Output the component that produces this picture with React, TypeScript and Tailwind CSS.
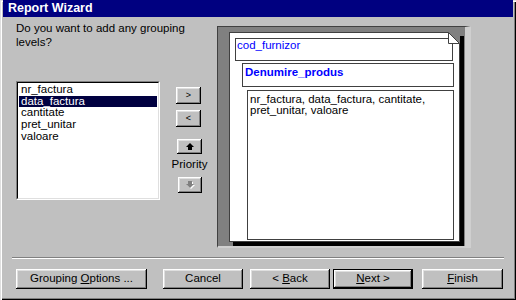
import React from "react";

const font = { fontFamily: '"Liberation Sans", Arial, sans-serif' };

const raised =
  "bg-[#c0c0c0] shadow-[inset_-1px_-1px_0_#000,inset_1px_1px_0_#fff,inset_-2px_-2px_0_#808080,inset_2px_2px_0_#dfdfdf]";

function WinButton({
  className,
  children,
  isDefault,
}: {
  className: string;
  children: React.ReactNode;
  isDefault?: boolean;
}) {
  if (isDefault) {
    return (
      <div className={`border border-black ${className}`}>
        <div className={`${raised} w-full h-full flex items-center justify-center text-black`}>
          {children}
        </div>
      </div>
    );
  }
  return (
    <div className={`${raised} flex items-center justify-center text-black ${className}`}>
      {children}
    </div>
  );
}

const FIELDS = ["nr_factura", "data_factura", "cantitate", "pret_unitar", "valoare"];

function FieldList() {
  return (
    <div className="w-[144px] h-[119px] mt-[32px] border-t border-l border-[#808080] border-r-white border-b-white border-r border-b">
      <div className="w-full h-full bg-white border-t border-l border-black border-r-[#dfdfdf] border-b-[#dfdfdf] border-r border-b pt-[1px] px-[1px]">
        {FIELDS.map((f) => (
          <div
            key={f}
            className={`h-[11.7px] leading-[11.7px] pl-[2px] ${
              f === "data_factura" ? "bg-[#000040] text-white" : "text-black"
            }`}
          >
            {f}
          </div>
        ))}
      </div>
    </div>
  );
}

function UpArrow({ color }: { color: string }) {
  return (
    <svg width="8" height="7" viewBox="0 0 8 7">
      <polygon points="4,0 8,4 6,4 6,7 2,7 2,4 0,4" fill={color} />
    </svg>
  );
}

function DownArrow() {
  return (
    <svg width="9" height="8" viewBox="0 0 9 8">
      <polygon points="3,1 7,1 7,4 9,4 5,8 1,4 3,4" fill="#fff" />
      <polygon points="2,0 6,0 6,3 8,3 4,7 0,3 2,3" fill="#808080" />
    </svg>
  );
}

function MoveButtons() {
  return (
    <div className="w-[57px] mt-[70px] flex flex-col items-center">
      <WinButton className="w-[25px] h-[17px] text-[9px]">&gt;</WinButton>
      <WinButton className="w-[25px] h-[17px] mt-[6px] text-[9px]">&lt;</WinButton>
      <WinButton className="w-[25px] h-[15px] mt-[12px] ml-[2px]">
        <UpArrow color="#000" />
      </WinButton>
      <div className="mt-[3px] ml-[2px] leading-[14px]">Priority</div>
      <WinButton className="w-[24px] h-[16px] mt-[6px] ml-[3px]">
        <DownArrow />
      </WinButton>
    </div>
  );
}

function Preview() {
  return (
    <div className="w-[254px] h-[222px] mt-[9px] border-t border-l border-[#404040] border-r-[6px] border-b-[2px] border-r-[#cfcfcf] border-b-[#cfcfcf] bg-[#808080] pl-[11px] pt-[5px]">
      <div className="relative w-[231px] h-[210px] bg-white border border-[#404040] shadow-[4px_4px_0_#000] pl-[5px] pt-[5px]">
        {/* folded page corner */}
        <svg className="absolute -top-px -right-px" width="12" height="12" viewBox="0 0 12 12">
          <polygon points="0,0 12,0 12,12" fill="#808080" />
          <polygon points="0.5,0.5 11.5,11.5 0.5,11.5" fill="#fff" stroke="#404040" strokeWidth="1" />
        </svg>
        <div className="w-[218px] h-[23px] border border-[#404040] text-[#0000ff] pl-[1px] leading-[13px]">
          cod_furnizor
        </div>
        <div className="w-[212px] h-[24px] ml-[7px] mt-[2px] border border-[#404040] text-[#0000ff] font-bold pl-[2px] pt-[1px] leading-[14px]">
          Denumire_produs
        </div>
        <div className="w-[207px] h-[150px] ml-[12px] mt-[3px] border border-[#404040] text-black pl-[2px] pt-[3px] leading-[11px]">
          nr_factura, data_factura, cantitate,
          <br />
          pret_unitar, valoare
        </div>
      </div>
    </div>
  );
}

export default function App() {
  return (
    <div
      className="w-[516px] h-[300px] bg-[#c0c0c0] flex flex-col text-[11.5px] text-black overflow-hidden shadow-[inset_1px_1px_0_#dfdfdf,inset_2px_2px_0_#fff,inset_-1px_-1px_0_#000,inset_-2px_-2px_0_#808080]"
      style={font}
    >
      <div className="h-[17px] mx-[3px] bg-[#000080] text-white font-bold text-[12.5px] leading-[17px] pl-[5px]">
        Report Wizard
      </div>

      <div className="h-[233px] flex items-start pl-[16px]">
        <div className="w-[144px] mt-[4px] flex flex-col">
          <div className="leading-[14px] whitespace-nowrap">
            Do you want to add any grouping
            <br />
            levels?
          </div>
          <FieldList />
        </div>
        <MoveButtons />
        <Preview />
      </div>

      <div className="mx-[12px] mt-[7px] h-[2px] border-t border-[#808080] border-b border-b-white" />

      <div className="flex mt-[10px] pl-[16px]">
        <WinButton className="w-[131px] h-[20px]">
          Grouping&nbsp;<u>O</u>ptions ...
        </WinButton>
        <WinButton className="w-[80px] h-[20px] ml-[16px]">Cancel</WinButton>
        <WinButton className="w-[80px] h-[20px] ml-[7px]">
          &lt;&nbsp;<u>B</u>ack
        </WinButton>
        <WinButton isDefault className="w-[80px] h-[20px] ml-[3px]">
          <u>N</u>ext&nbsp;&gt;
        </WinButton>
        <WinButton className="w-[81px] h-[20px] ml-[9px]">
          <u>F</u>inish
        </WinButton>
      </div>
    </div>
  );
}
